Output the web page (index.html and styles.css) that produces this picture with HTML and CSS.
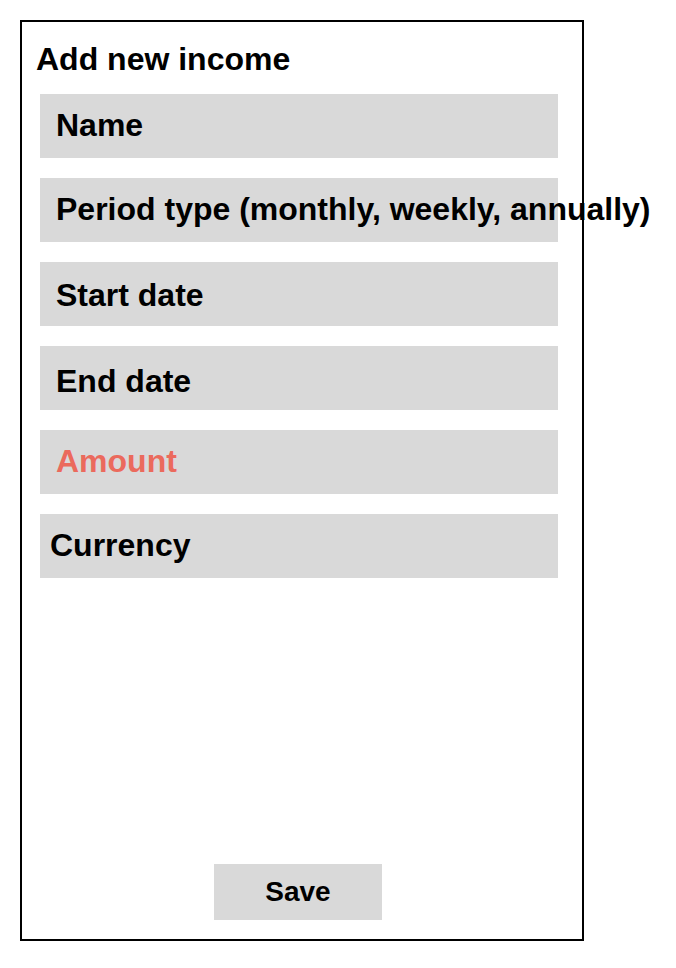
FILE: index.html
```html
<!DOCTYPE html>
<html lang="en">
<head>
<meta charset="utf-8">
<title>Add new income</title>
<link rel="stylesheet" href="styles.css">
</head>
<body>
<div class="card">
  <h1 class="title">Add new income</h1>
  <div class="fields">
    <div class="field">Name</div>
    <div class="field">Period type (monthly, weekly, annually)</div>
    <div class="field field-mid">Start date</div>
    <div class="field field-low">End date</div>
    <div class="field field-error">Amount</div>
    <div class="field field-tight">Currency</div>
  </div>
  <div class="footer">
    <button class="save" type="button">Save</button>
  </div>
</div>
</body>
</html>
```

FILE: styles.css
```css
html, body {
  margin: 0;
  padding: 0;
  background: #ffffff;
}

body {
  padding: 20px;
  font-family: "Liberation Sans", Arial, sans-serif;
  color: #000000;
}

.card {
  box-sizing: border-box;
  width: 564px;
  height: 921px;
  border: 2px solid #000000;
  display: flex;
  flex-direction: column;
  padding: 0 0 19px 0;
}

.title {
  margin: 19px 0 0 14px;
  font-size: 32px;
  font-weight: bold;
  line-height: normal;
  white-space: nowrap;
}

.fields {
  margin: 16px 0 0 18px;
  width: 518px;
  display: flex;
  flex-direction: column;
  gap: 20px;
}

.field {
  box-sizing: border-box;
  height: 64px;
  background: #d9d9d9;
  padding: 13px 0 0 16px;
  font-size: 32px;
  font-weight: bold;
  line-height: normal;
  white-space: nowrap;
}

.field-mid {
  padding-top: 15px;
}

.field-low {
  padding-top: 17px;
}

.field-error {
  color: #eb6a5d;
}

.field-tight {
  padding-left: 10px;
}

.footer {
  margin: auto 0 0 18px;
  width: 516px;
  display: flex;
  justify-content: center;
}

.save {
  width: 168px;
  height: 56px;
  border: none;
  border-radius: 0;
  background: #d9d9d9;
  padding: 0;
  font-family: "Liberation Sans", Arial, sans-serif;
  font-size: 28px;
  font-weight: bold;
  color: #000000;
}
```
